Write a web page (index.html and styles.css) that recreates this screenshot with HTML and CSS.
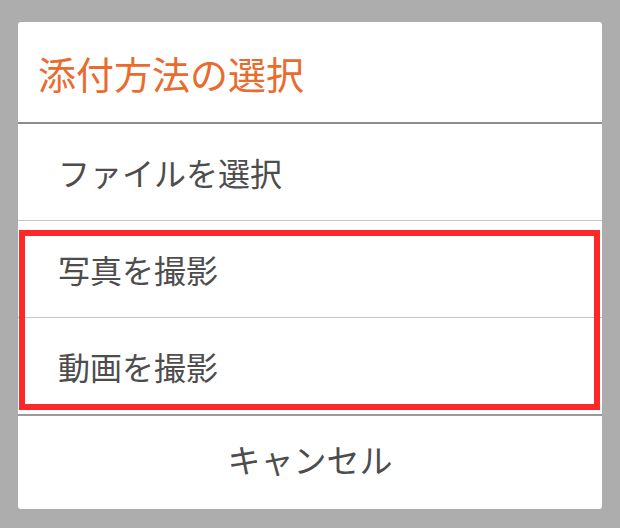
FILE: index.html
```html
<!DOCTYPE html>
<html lang="ja">
<head>
    <meta charset="UTF-8">
    <meta name="viewport" content="width=device-width, initial-scale=1.0">
    <title>添付方法の選択</title>
    <link rel="stylesheet" href="styles.css">
</head>
<body>

<div class="dialog">
    <div class="dialog-title">添付方法の選択</div>
    <div class="option">ファイルを選択</div>
    <div class="option">写真を撮影</div>
    <div class="option option-last">動画を撮影</div>
    <div class="cancel">キャンセル</div>

    <div class="highlight"></div>
</div>

</body>
</html>
```

FILE: styles.css
```css
body {
    margin: 0;
    padding: 22px 18px;
    background-color: #adadad;
    font-family: "Noto Sans CJK JP", "Noto Sans", sans-serif;
}

.dialog {
    position: relative;
    background: white;
    border-radius: 3px;
    width: 584px;
}

.dialog-title {
    display: flex;
    align-items: center;
    height: 100px;
    padding-left: 20px;
    font-size: 38px;
    color: #e96b2d;
    border-bottom: 2px solid #8c8c8c;
}

.option {
    display: flex;
    align-items: center;
    height: 96px;
    padding-left: 40px;
    font-size: 32px;
    color: #4d4d4d;
    border-bottom: 1px solid #c6c6c6;
}

.option-last {
    border-bottom: 2px solid #9a9a9a;
}

.cancel {
    display: flex;
    align-items: center;
    justify-content: center;
    height: 85px;
    padding-bottom: 8px;
    font-size: 33px;
    color: #4d4d4d;
}

/* red annotation box over the two camera options */
.highlight {
    position: absolute;
    left: 1px;
    top: 208px;
    width: 581px;
    height: 180px;
    border: 6px solid #ff2828;
    box-sizing: border-box;
}
```
